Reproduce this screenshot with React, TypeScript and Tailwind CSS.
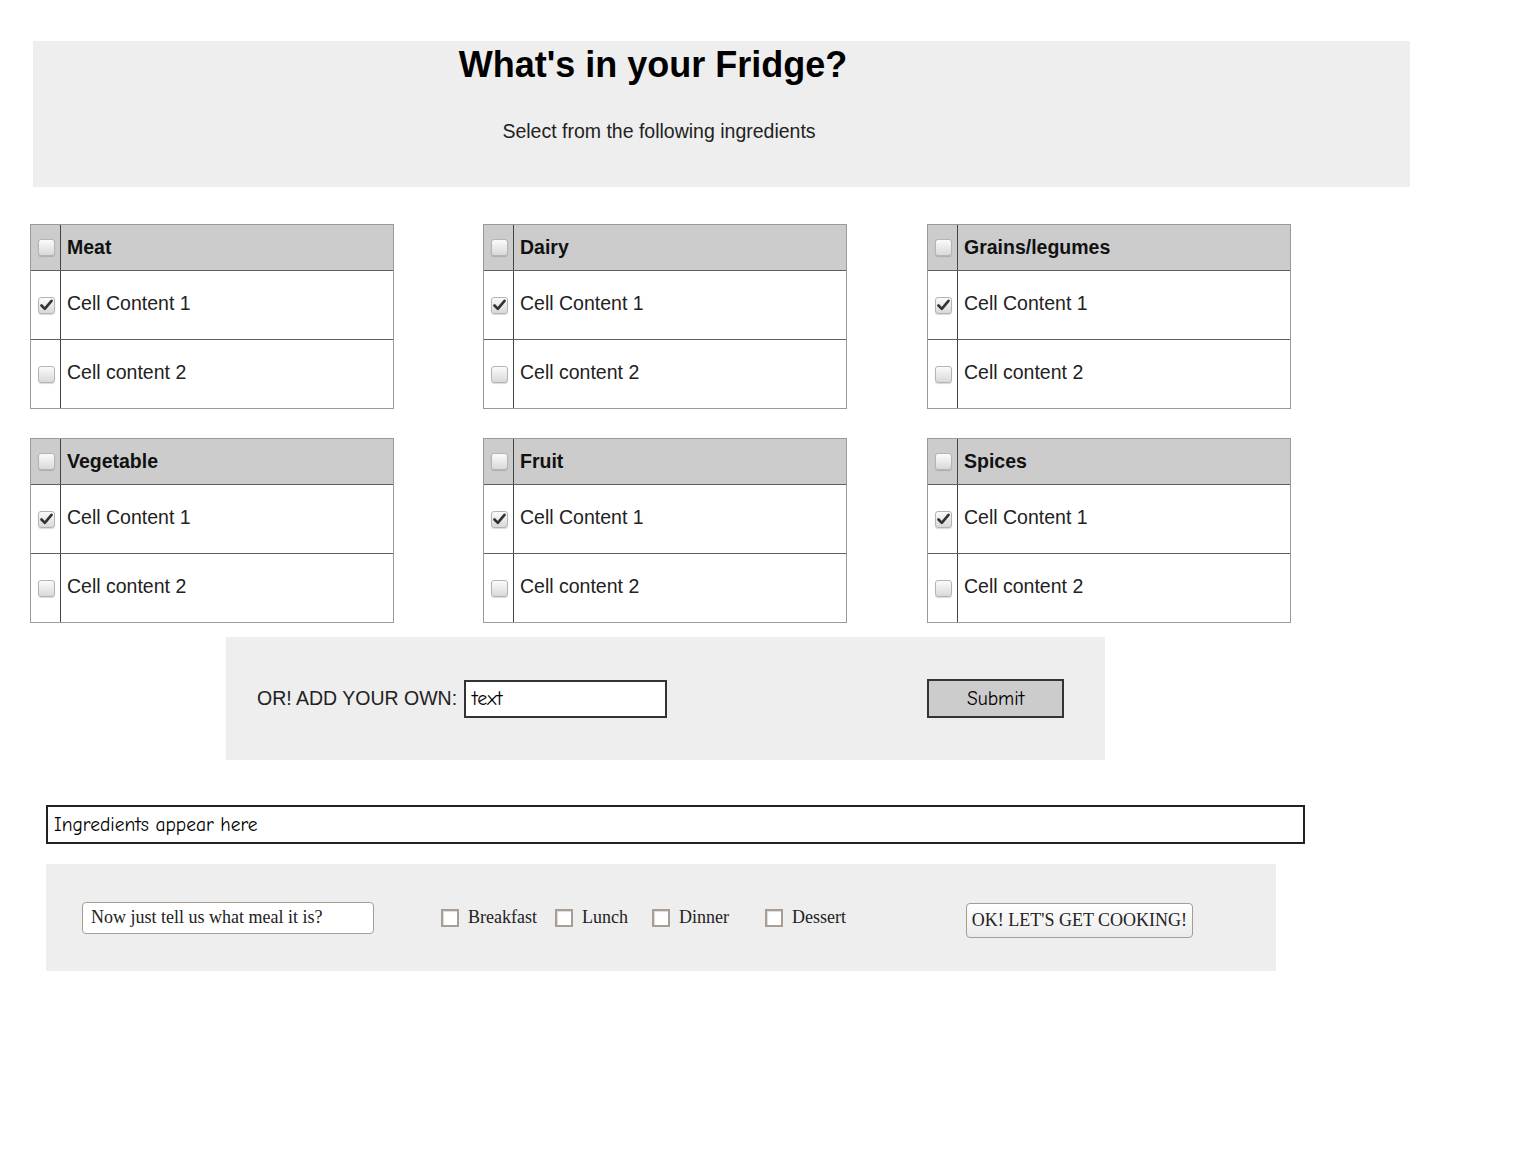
import React from "react";

const arial = "font-['Liberation_Sans',Arial,sans-serif]";
const comic = "font-['Comic_Sans_MS','Comic_Neue','DejaVu_Sans',sans-serif]";
const serif = "font-['Liberation_Serif','Times_New_Roman',serif]";

function Check({ checked }: { checked?: boolean }) {
  return (
    <span className="ml-[1px] flex h-[17px] w-[17px] items-center justify-center rounded-[3px] border border-[#b4b4b4] bg-gradient-to-b from-[#fbfbfb] to-[#d9d9d9] shadow-[0_1px_1px_rgba(0,0,0,0.15)]">
      {checked && (
        <svg width="13" height="12" viewBox="0 0 13 12">
          <path d="M1.5 6.5 L4.8 9.8 L11.5 1.8" fill="none" stroke="#333" strokeWidth="2.6" strokeLinejoin="round" strokeLinecap="round" />
        </svg>
      )}
    </span>
  );
}

function Table({ title, className = "" }: { title: string; className?: string }) {
  return (
    <div className={`w-[364px] border border-[#9a9a9a] ${className}`}>
      <div className="flex h-[46px] bg-[#cccccc] border-b border-[#5f5f5f]">
        <div className="flex w-[30px] items-center justify-center border-r border-[#444]">
          <Check />
        </div>
        <div className={`flex items-center pl-[6px] text-[19.5px] font-bold text-[#111] ${arial}`}>{title}</div>
      </div>
      <div className="flex h-[69px] border-b border-[#5f5f5f]">
        <div className="flex w-[30px] items-center justify-center border-r border-[#444]">
          <Check checked />
        </div>
        <div className={`flex items-center pl-[6px] pb-[2px] text-[19.5px] text-[#222] ${arial}`}>Cell Content 1</div>
      </div>
      <div className="flex h-[68px]">
        <div className="flex w-[30px] items-center justify-center border-r border-[#444]">
          <Check />
        </div>
        <div className={`flex items-center pl-[6px] pb-[2px] text-[19.5px] text-[#222] ${arial}`}>Cell content 2</div>
      </div>
    </div>
  );
}

function MealBox({ label, className = "" }: { label: string; className?: string }) {
  return (
    <label className={`flex items-center ${className}`}>
      <span className="h-[18px] w-[18px] border-2 border-[#a89e93] bg-white shadow-[inset_1px_1px_1px_rgba(0,0,0,0.15)]" />
      <span className={`ml-[9px] text-[18px] text-[#222] ${serif}`}>{label}</span>
    </label>
  );
}

export default function App() {
  return (
    <div className="min-h-[1152px] bg-white pl-[30px] pt-[41px]">
      {/* Header */}
      <div className="ml-[3px] h-[146px] w-[1377px] bg-[#eeeeee] pt-[4px]">
        <h1 className={`w-[1240px] text-center text-[36px] font-bold leading-[40px] text-black ${arial}`}>
          What's in your Fridge?
        </h1>
        <p className={`mt-[34px] w-[1252px] text-center text-[19.5px] leading-[24px] text-[#222] ${arial}`}>
          Select from the following ingredients
        </p>
      </div>

      {/* Tables */}
      <div className="mt-[37px] flex">
        <Table title="Meat" />
        <Table title="Dairy" className="ml-[89px]" />
        <Table title="Grains/legumes" className="ml-[80px]" />
      </div>
      <div className="mt-[29px] flex">
        <Table title="Vegetable" />
        <Table title="Fruit" className="ml-[89px]" />
        <Table title="Spices" className="ml-[80px]" />
      </div>

      {/* Add your own */}
      <div className="ml-[196px] mt-[14px] flex h-[123px] w-[879px] items-center bg-[#eeeeee] pl-[31px]">
        <span className={`text-[19.5px] text-[#222] ${arial}`}>OR! ADD YOUR OWN:</span>
        <div className={`ml-[7px] flex h-[38px] w-[203px] items-center border-2 border-[#333] bg-white pl-[6px] text-[20px] text-black ${comic}`}>
          text
        </div>
        <button className={`ml-[260px] flex h-[39px] w-[137px] items-center justify-center border-2 border-[#333] bg-[#cccccc] text-[19.5px] text-black ${comic}`}>
          Submit
        </button>
      </div>

      {/* Ingredients */}
      <div className={`ml-[16px] mt-[45px] flex h-[39px] w-[1259px] items-center border-2 border-[#222] bg-white pl-[6px] text-[19.5px] text-black ${comic}`}>
        Ingredients appear here
      </div>

      {/* Meal bar */}
      <div className="ml-[16px] mt-[20px] flex h-[107px] w-[1230px] items-center bg-[#eeeeee] pl-[36px]">
        <div className={`flex h-[32px] w-[292px] items-center rounded-[4px] border-[1.5px] border-[#a69c8f] bg-white pl-[8px] text-[18px] text-[#222] ${serif}`}>
          Now just tell us what meal it is?
        </div>
        <MealBox label="Breakfast" className="ml-[67px]" />
        <MealBox label="Lunch" className="ml-[18px]" />
        <MealBox label="Dinner" className="ml-[24px]" />
        <MealBox label="Dessert" className="ml-[36px]" />
        <button className={`ml-[120px] mt-[5px] flex h-[35px] w-[227px] items-center justify-center rounded-[4px] border-[1.5px] border-[#a69c8f] bg-gradient-to-b from-white to-[#ebebeb] text-[18px] text-[#222] ${serif}`}>
          OK! LET'S GET COOKING!
        </button>
      </div>
    </div>
  );
}
